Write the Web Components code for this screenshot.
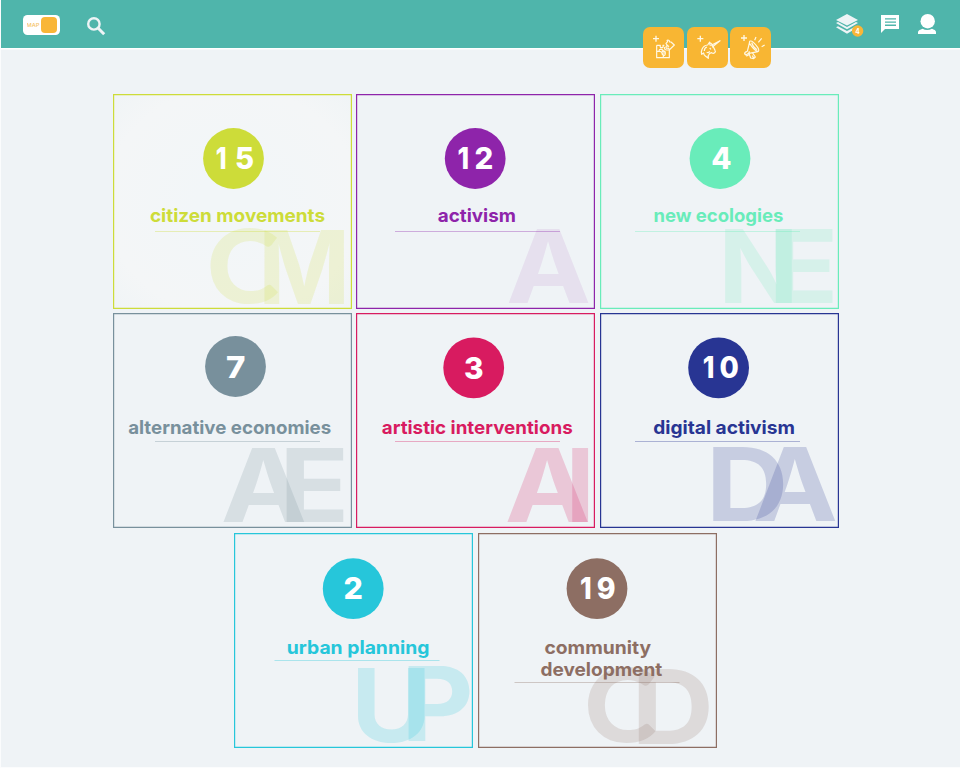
<!DOCTYPE html>
<html lang="en">
<head>
<meta charset="utf-8">
<title>Map categories</title>
<style>
body{margin:0;background:#eff3f6;font-family:Inter,"Open Sans",sans-serif}
</style>
</head>
<body>
<map-page></map-page>
<script>
const FONT = 'Inter,"Open Sans",sans-serif';
const ctx = document.createElement('canvas').getContext('2d');
// Text stretched so that its ink fills a given width (and, optionally, height).
function fitText(str, x, y, w, h, opts = {}) {
  const weight = opts.weight || 700, size = 100, font = opts.font || FONT;
  ctx.font = `${weight} ${size}px ${font}`;
  const m = ctx.measureText(str);
  const inkW = m.actualBoundingBoxRight + m.actualBoundingBoxLeft;
  const sx = w / inkW;
  const sy = opts.size ? opts.size / size : h / (m.actualBoundingBoxAscent + m.actualBoundingBoxDescent);
  const tx = x + m.actualBoundingBoxLeft * sx;
  const base = opts.size ? y : y + m.actualBoundingBoxAscent * sy;
  return `<text font-family='${font}' font-size="${size}" font-weight="${weight}" transform="matrix(${sx} 0 0 ${sy} ${tx} ${base})" fill="${opts.fill || 'currentColor'}" fill-opacity="${opts.alpha || 1}">${str}</text>`;
}
function define(name, render) {
  customElements.define(name, class extends HTMLElement {
    connectedCallback() {
      if (this.shadowRoot) return;
      this.attachShadow({mode: 'open'}).innerHTML = render(this);
    }
  });
}

define('map-toggle', () => `<style>
:host{display:flex;box-sizing:border-box;width:37px;height:20px;padding:2px 3px 2px 4px;background:#fff;border-radius:4.5px;justify-content:space-between;align-items:center}
i{width:16px;height:16px;background:#f9b637;border-radius:4px}svg{display:block}</style>
<svg width="13" height="6">${fitText('MAP', 0, 5, 12.3, 0, {size: 5.2, fill: '#f5c468', weight: 500})}</svg><i></i>`);

define('app-bar', () => `<style>
:host{display:flex;box-sizing:border-box;height:48px;background:#4fb5ab;padding:1px 24px 0 22px;align-items:center;box-shadow:0 1.5px 0 #fff}
svg{display:block;overflow:visible}.search{margin-left:27px;margin-top:3px}.right{margin-left:auto;display:flex;align-items:center}
.layers{margin-top:-1px}.chat{margin:-1px 0 0 23px}.user{margin:-1px 0 0 19px}</style>
<map-toggle></map-toggle>
<svg class="search" width="18" height="18" viewBox="0 0 18 18" fill="none" stroke="#eef4f6"><circle cx="6.9" cy="6.9" r="5.7" stroke-width="2.4"/><path d="M11 11l6.2 6.2" stroke-width="3"/></svg>
<div class="right">
<svg class="layers" width="22" height="20" viewBox="0 0 22 20"><g fill="#eef4f6"><path d="M11 0L22 5.900 11 11.600 0 5.900z"/><path d="M0 9l2-.9 9 4.800 9-4.800 2 .9-11 6.300z"/><path d="M0 13.200l2-.9 9 4.800 9-4.800 2 .9-11 6.600z"/></g><circle cx="21.600" cy="17" r="5.700" fill="#f9b637"/>${fitText('4', 19.5, 19.6, 4, 0, {size: 7, fill: '#fff'})}</svg>
<svg class="chat" width="18" height="18" viewBox="0 0 18 18"><path fill="#fff" d="M0 0h18v14H4L0 18z"/><path stroke="#4fb5ab" stroke-width="1.400" d="M4 3.900h11M4 7.100h11M4 10.300h11"/></svg>
<svg class="user" width="18" height="20" viewBox="0 0 18 20" fill="#fff"><circle cx="9.700" cy="7.200" r="7.200"/><path d="M0 20v-2c0-1.600 2.500-2.500 4.500-3.300q4.500 2.600 9.500 0c2 .8 4 1.700 4 3.300v2z"/></svg>
</div>`);

// Orange add-buttons; icon artwork is drawn on a 123-unit square.
define('add-tile', el => {
  const icons = {
    puzzle: ['39 36 123 123', '<path d="M69 71h18M78 62v18" stroke-width="4"/><path d="M80 91h11q-2 7 4 7t4-7h4M80 91v37h38v-24M80 109h8q-2-7 5-6t5 5 5-2M88 109q7 0 8 5h10M96 114q0 6 6 6M100 110q6-3 6 5t-6 5v8M104 96q-2 9 6 9h8"/><path d="M108 85l5-5q-4-5 1-5 5 1 5 6l4 0 10 9-14 14-5-5q-6 3-6-3 1-5 5-3zM112 91l5 4"/>'],
    unicorn: ['171 36 123 123', '<path d="M202 71h18M211 62v18" stroke-width="4"/><path d="M241 92l29-15-24 20"/><path d="M240 91l-1-10-6 9q-12 1-17 13-3 7-1 15l6-4q0 6 5 9l9 7q-2-9 4-15l6-2q5 4 9 0 4-3 1-7l-9-18q-3-5-10-4M231 96q-8 2-8 12M239 99l4 4M230 112q6 3 9-3" />'],
    horn: ['300 36 123 123', '<path d="M333 69h18M342 60v18" stroke-width="4"/><path d="M359 79q4-3 11 3t13 15q5 9 2 12-5 1-13-7t-12-15q-3-6-1-8zM359 81l-7 28M384 110l-27 5M365 83q3 12 16 21M352 109q-9 2-8 8 5 4 10-1 5-2 3-7M347 119l3 4 9-5M358 118l4 11 9 2 5-5-9-13M367 122l4 7"/><path d="M374 76l4-10M385 82l10-12M395 95l9-5" stroke-width="3.500"/>']
  };
  const [box, art] = icons[el.getAttribute('icon')];
  return `<style>:host{display:block;width:41px;height:41px;border-radius:7px;background:#f8b633}svg{display:block}</style><svg width="41" height="41" viewBox="${box}" fill="none" stroke="#fff8e4" stroke-width="3.600" stroke-linejoin="round">${art}</svg>`;
});

// Card data, in the coordinates of the 239x215 box:
// n = digits, nb = their baseline, t = title lines, l = rule, w = large initials.
const cards = {
  cm: {c: '#cddc39', cx: 120.5, cy: 64.5, n: [['1', 103.8, 8.6], ['5', 123.5, 16.7]], nb: 75, t: [['citizen movements', 37.5, 174, 127.7]], l: [42, 137], w: [['C', 97, 134.2, 69, 75.8], ['M', 151, 135, 80.3, 74.5]], a: .18, glow: 1},
  a: {c: '#8e24aa', cx: 119.2, cy: 64.5, n: [['1', 102.5, 9.2], ['2', 119.6, 16.5]], nb: 75, t: [['activism', 82.3, 76.5, 127.7]], l: [39, 137], w: [['A', 152.300, 134.500, 81, 74.5]], a: .09},
  ne: {c: '#69ecba', cx: 120, cy: 64.5, n: [['4', 112.5, 18]], nb: 75, t: [['new ecologies', 54.5, 128.5, 127.7]], l: [35, 137], w: [['N', 124.7, 134.500, 67.5, 74.5], ['E', 175.2, 134.500, 58, 74.5]], a: .19},
  ae: {c: '#78909c', cx: 122.5, cy: 53.5, n: [['7', 114, 17.5]], nb: 65, t: [['alternative economies', 15.7, 202, 121.2]], l: [42, 128], w: [['A', 110, 134.8, 82, 74.3], ['E', 173, 134.8, 58, 74.3]], a: .2},
  ai: {c: '#d81b60', cx: 117.7, cy: 54.8, n: [['3', 109.2, 17.3]], nb: 66, t: [['artistic interventions', 26.3, 190, 121.2]], l: [39, 128], w: [['A', 151, 134.8, 81.5, 74.3], ['I', 215.500, 134.8, 17, 74.3]], a: .2},
  da: {c: '#283593', cx: 118.600, cy: 54.8, n: [['1', 103.8, 9.3], ['0', 120.5, 17.3]], nb: 65, t: [['digital activism', 53.8, 140, 121.2]], l: [35, 128], w: [['D', 112.5, 133.8, 71, 74.3], ['A', 155, 133.8, 81, 74.3]], a: .2},
  up: {c: '#26c6da', cx: 119.2, cy: 55.7, n: [['2', 110.7, 17]], nb: 66, t: [['urban planning', 54, 140.3, 121.3]], l: [40.5, 127], w: [['U', 123.5, 134.2, 67.5, 75.5], ['P', 174, 133, 61.5, 75]], a: .2},
  cd: {c: '#8d6e63', cx: 119, cy: 55.7, n: [['1', 103, 9.3], ['9', 119.8, 16.8]], nb: 66, t: [['community', 67, 106, 121.3], ['development', 63, 121, 142.9]], l: [36.5, 149], w: [['C', 109.5, 134.5, 69, 75.5], ['D', 160, 136, 71, 75]], a: .19}
};
define('topic-card', el => {
  const d = cards[el.getAttribute('topic')];
  return `<style>
:host{display:block;width:239px;height:215px;position:relative;color:${d.c};box-shadow:inset 0 0 0 1.2px currentColor;${d.glow ? 'background:radial-gradient(ellipse at center,#f2f6f8 20%,#f4f6f7 75%,#f0f4f6)' : ''}}
svg{display:block;overflow:visible}</style>
<svg width="239" height="215">
${d.w.map(w => fitText(w[0], w[1], w[2], w[3], w[4], w[0] === 'C' ? {alpha: d.a, font: 'Lato,sans-serif', weight: 900} : {alpha: d.a})).join('')}
<circle cx="${d.cx}" cy="${d.cy}" r="30.4" fill="currentColor"/>
${d.n.map(n => fitText(n[0], n[1], d.nb, n[2], 0, {size: 29.6, fill: '#fff', weight: 800})).join('')}
${d.t.map(t => fitText(t[0], t[1], t[3], t[2], 0, {size: 18.4, weight: 700})).join('')}
<path d="M${d.l[0]} ${d.l[1] + .5}h165" stroke="currentColor" stroke-opacity=".34"/>
</svg>`;
});

define('card-row', () => `<style>:host{display:grid;grid-template-columns:repeat(3,239px);column-gap:4px}::slotted(:nth-child(3)){margin-left:1px}</style><slot></slot>`);

define('map-page', () => `<style>
:host{display:block;box-sizing:border-box;height:768px;border:solid #fbfcfd;border-width:0 0 1px 1px;background:#eff3f6;position:relative;overflow:hidden}
.tools{position:absolute;left:642px;top:27px;display:flex;gap:2.5px}
main{display:flex;flex-direction:column;gap:4px;padding:46px 0 0 112px}
.last{margin:1px 0 0 121px;column-gap:5px}</style>
<app-bar></app-bar>
<div class="tools"><add-tile icon="puzzle"></add-tile><add-tile icon="unicorn"></add-tile><add-tile icon="horn"></add-tile></div>
<main>
<card-row><topic-card topic="cm"></topic-card><topic-card topic="a"></topic-card><topic-card topic="ne"></topic-card></card-row>
<card-row><topic-card topic="ae"></topic-card><topic-card topic="ai"></topic-card><topic-card topic="da"></topic-card></card-row>
<card-row class="last"><topic-card topic="up"></topic-card><topic-card topic="cd"></topic-card></card-row>
</main>`);
</script>
</body>
</html>
